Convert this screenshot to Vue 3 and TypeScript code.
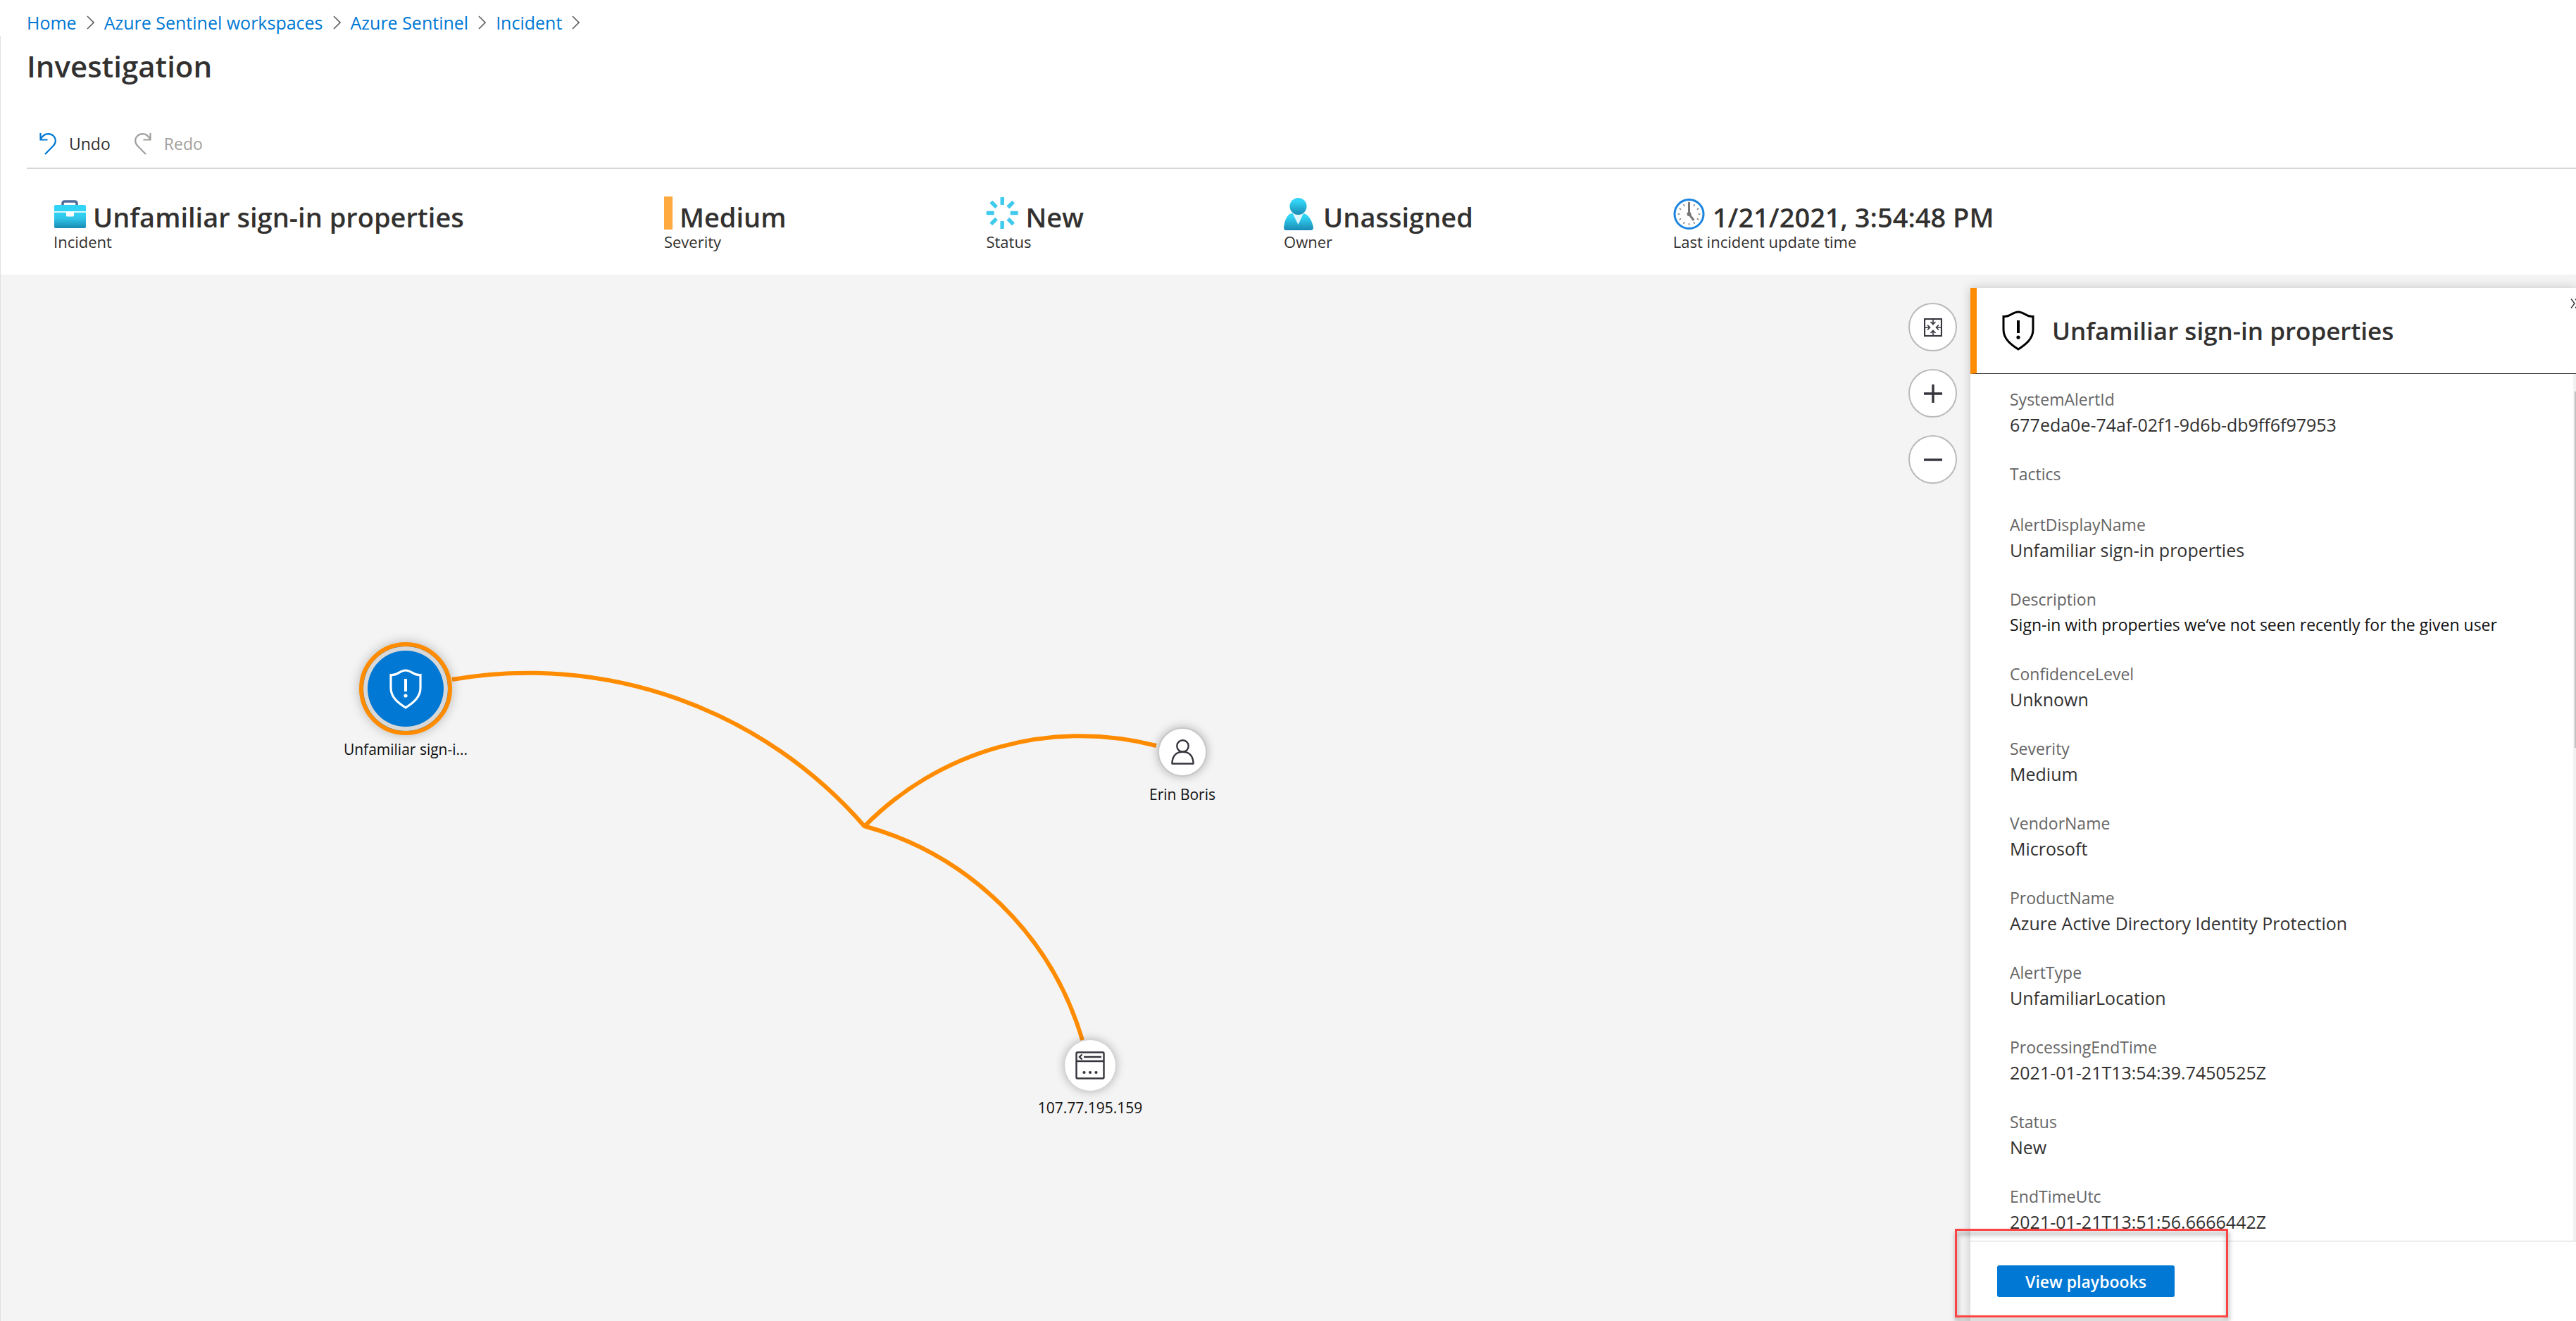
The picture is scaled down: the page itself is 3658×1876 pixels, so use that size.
<script setup lang="ts">
interface Property {
  name: string
  value?: string
}

interface GraphNode {
  id: string
  kind: 'alert' | 'account' | 'ip'
  label: string
  x: number
  y: number
}

const crumbs: string[] = ['Home', 'Azure Sentinel workspaces', 'Azure Sentinel', 'Incident']

const properties: Property[] = [
  { name: 'SystemAlertId', value: '677eda0e-74af-02f1-9d6b-db9ff6f97953' },
  { name: 'Tactics' },
  { name: 'AlertDisplayName', value: 'Unfamiliar sign-in properties' },
  { name: 'Description', value: 'Sign-in with properties we‘ve not seen recently for the given user' },
  { name: 'ConfidenceLevel', value: 'Unknown' },
  { name: 'Severity', value: 'Medium' },
  { name: 'VendorName', value: 'Microsoft' },
  { name: 'ProductName', value: 'Azure Active Directory Identity Protection' },
  { name: 'AlertType', value: 'UnfamiliarLocation' },
  { name: 'ProcessingEndTime', value: '2021-01-21T13:54:39.7450525Z' },
  { name: 'Status', value: 'New' },
  { name: 'EndTimeUtc', value: '2021-01-21T13:51:56.6666442Z' },
]

// Node centres on the graph canvas
const nodes: GraphNode[] = [
  { id: 'alert', kind: 'alert', label: 'Unfamiliar sign-i...', x: 575, y: 588 },
  { id: 'account', kind: 'account', label: 'Erin Boris', x: 1678, y: 678 },
  { id: 'ip', kind: 'ip', label: '107.77.195.159', x: 1547, y: 1123 },
]

const edges: string[] = [
  'M641 575 A632 632 0 0 1 1227 784',
  'M1226 784 A430 430 0 0 1 1641 669',
  'M1226 783 A446 446 0 0 1 1536 1087',
]
</script>

<template>
  <div class="app">
    <nav class="crumbs" aria-label="Breadcrumb">
      <template v-for="crumb in crumbs" :key="crumb">
        <a href="#">{{ crumb }}</a>
        <svg width="11" height="20" viewBox="0 0 11 20" aria-hidden="true">
          <path d="M1 1 L10 10 L1 19" fill="none" stroke="#605e5c" stroke-width="1.6" />
        </svg>
      </template>
    </nav>

    <main class="blade">
      <h1>Investigation</h1>

      <div class="toolbar">
        <button type="button" class="tool">
          <svg width="24" height="31" viewBox="0 0 24 31" fill="none" stroke="#0078d4" stroke-width="2.2" aria-hidden="true">
            <path d="M1.5 0 V9.5 H11.5 M1.5 9.5 C4 4 8 1.2 12.5 1.2 C18.5 1.2 22.8 5.5 22.8 11 C22.8 14 21.8 16 19.5 18.3 L8 30" />
          </svg>
          Undo
        </button>
        <button type="button" class="tool" disabled>
          <svg width="24" height="31" viewBox="0 0 24 31" fill="none" stroke="#a19f9d" stroke-width="2.2" aria-hidden="true">
            <path d="M22.5 0 V9.5 H12.5 M22.5 9.5 C20 4 16 1.2 11.5 1.2 C5.5 1.2 1.2 5.5 1.2 11 C1.2 14 2.2 16 4.5 18.3 L16 30" />
          </svg>
          Redo
        </button>
      </div>

      <section class="summary" aria-label="Incident summary">
        <div class="fact">
          <div class="fact-main">
            <svg width="46" height="47" viewBox="0 0 46 47" aria-hidden="true">
              <defs>
                <linearGradient id="case" x1="0" y1="0" x2="0" y2="1">
                  <stop offset="0" stop-color="#32d4f5" />
                  <stop offset="0.4" stop-color="#2fc4e8" />
                  <stop offset="1" stop-color="#198ab3" />
                </linearGradient>
              </defs>
              <path d="M13 13 V10 Q13 7 16 7 H30 Q33 7 33 10 V13" fill="none" stroke="#4f6b99" stroke-width="3.5" />
              <path d="M1 14 Q1 12 3 12 H44 Q46 12 46 14 V21.5 H1 Z" fill="#32d4f5" />
              <path d="M1 22.5 H46 V43 Q46 45 44 45 H3 Q1 45 1 43 Z" fill="url(#case)" />
              <path d="M1 21.2 H46 V22.5 H29 V27 Q29 28.5 27.5 28.5 H19.5 Q18 28.5 18 27 V22.5 H1 Z" fill="#fff" />
            </svg>
            <strong>Unfamiliar sign-in properties</strong>
          </div>
          <span>Incident</span>
        </div>

        <div class="fact">
          <div class="fact-main">
            <i class="severity-bar"></i>
            <strong>Medium</strong>
          </div>
          <span>Severity</span>
        </div>

        <div class="fact">
          <div class="fact-main">
            <svg width="46" height="47" viewBox="0 0 46 47" aria-hidden="true">
              <rect
                v-for="n in 8"
                :key="n"
                x="20.5"
                y="1"
                width="5.5"
                height="11"
                rx="1"
                fill="#40caec"
                :transform="`rotate(${n * 45} 23.2 23.5)`"
              />
            </svg>
            <strong>New</strong>
          </div>
          <span>Status</span>
        </div>

        <div class="fact">
          <div class="fact-main">
            <svg width="46" height="48" viewBox="0 0 46 48" aria-hidden="true">
              <defs>
                <linearGradient id="person" x1="0" y1="0" x2="0" y2="1">
                  <stop offset="0.2" stop-color="#32d4f5" />
                  <stop offset="1" stop-color="#198ab3" />
                </linearGradient>
              </defs>
              <path d="M0 44 C1 34 5 25 11 24 H28 C35 25 40 34 42 44 Q42 48 38 48 H3 Q0 48 0 44 Z" fill="url(#person)" />
              <path d="M12.5 24 L20.5 40 L28 24 Z" fill="#dff6fc" />
              <circle cx="20.5" cy="14" r="12" fill="url(#person)" />
            </svg>
            <strong>Unassigned</strong>
          </div>
          <span>Owner</span>
        </div>

        <div class="fact">
          <div class="fact-main">
            <svg width="46" height="48" viewBox="0 0 46 48" aria-hidden="true">
              <circle cx="22.5" cy="25" r="20.5" fill="#fff" stroke="#1b84df" stroke-width="3" />
              <g stroke="#8a8a8a" stroke-width="1.6">
                <line
                  v-for="n in 11"
                  :key="n"
                  x1="22.5"
                  y1="9"
                  x2="22.5"
                  y2="12"
                  :transform="`rotate(${n * 30} 22.5 25)`"
                />
              </g>
              <path d="M22.5 9 V25 L28.5 33" fill="none" stroke="#767676" stroke-width="3" stroke-linecap="round" />
              <circle cx="22.5" cy="25" r="3" fill="#767676" />
            </svg>
            <strong>1/21/2021, 3:54:48 PM</strong>
          </div>
          <span>Last incident update time</span>
        </div>
      </section>

      <div class="workspace">
        <section class="canvas" aria-label="Investigation graph">
          <svg class="edges" aria-hidden="true">
            <path v-for="edge in edges" :key="edge" :d="edge" />
          </svg>

          <div
            v-for="node in nodes"
            :key="node.id"
            class="node"
            :class="node.kind"
            :style="{ left: node.x + 'px', top: node.y + 'px' }"
          >
            <div class="disc">
              <svg v-if="node.kind === 'alert'" width="46" height="57" viewBox="0 0 46 57" fill="none" stroke="#fff" aria-hidden="true">
                <path d="M2 8.5 C12 9.5 14 2 23 2 S34 9.5 44 8.5 V27 C44 40 34 48 23 55 C12 48 2 40 2 27 Z" stroke-width="3.2" />
                <path d="M23 14 V32" stroke-width="4" />
                <circle cx="23" cy="38" r="2.6" fill="#fff" stroke="none" />
              </svg>
              <svg v-else-if="node.kind === 'account'" width="33" height="36" viewBox="0 0 33 36" fill="none" stroke="#37343d" stroke-width="2.4" aria-hidden="true">
                <circle cx="16.5" cy="9.5" r="8.2" />
                <path d="M1.5 34.5 V32 C2.5 23 8 17.7 16.5 17.7 S30.5 23 31.5 32 V34.5 Z" stroke-linejoin="round" />
              </svg>
              <svg v-else width="42" height="40" viewBox="0 0 42 40" fill="none" stroke="#37343d" stroke-width="2.4" aria-hidden="true">
                <rect x="1.5" y="1.5" width="39" height="37" rx="1.5" />
                <path d="M1.5 14 H40.5 M12 8 H37" />
                <path d="M9.5 4.5 L6 8 L9.5 11.5" />
                <g fill="#37343d" stroke="none">
                  <circle cx="12.5" cy="30" r="2.1" />
                  <circle cx="21" cy="30" r="2.1" />
                  <circle cx="29.5" cy="30" r="2.1" />
                </g>
              </svg>
            </div>
            <div class="node-label">{{ node.label }}</div>
          </div>

          <div class="zoom">
            <button type="button" aria-label="Fit to screen">
              <svg width="26" height="26" viewBox="0 0 26 26" fill="none" stroke="#37343d" stroke-width="1.6" aria-hidden="true">
                <rect x="1" y="1" width="24" height="24" stroke-width="2.2" />
                <path d="M13 2 V8 M9.5 5 L13 8.5 L16.5 5" />
                <path d="M13 24 V18 M9.5 21 L13 17.5 L16.5 21" />
                <path d="M2 13 H8 M5 9.5 L8.5 13 L5 16.5" />
                <path d="M24 13 H18 M21 9.5 L17.5 13 L21 16.5" />
              </svg>
            </button>
            <button type="button" aria-label="Zoom in">
              <svg width="26" height="26" viewBox="0 0 26 26" stroke="#37343d" stroke-width="3.4" aria-hidden="true">
                <path d="M0 13 H26 M13 0 V26" />
              </svg>
            </button>
            <button type="button" aria-label="Zoom out">
              <svg width="26" height="26" viewBox="0 0 26 26" stroke="#37343d" stroke-width="3.4" aria-hidden="true">
                <path d="M0 13 H26" />
              </svg>
            </button>
          </div>
        </section>

        <aside class="panel">
          <header class="panel-head">
            <svg width="46" height="57" viewBox="0 0 46 57" fill="none" stroke="#000" aria-hidden="true">
              <path d="M2 8.5 C12 9.5 14 2 23 2 S34 9.5 44 8.5 V27 C44 40 34 48 23 55 C12 48 2 40 2 27 Z" stroke-width="3" />
              <path d="M23 14 V32" stroke-width="4" />
              <circle cx="23" cy="38" r="2.6" fill="#000" stroke="none" />
            </svg>
            <h2>Unfamiliar sign-in properties</h2>
            <button type="button" class="collapse" aria-label="Collapse panel">
              <svg width="14" height="14" viewBox="0 0 14 14" fill="none" stroke="#323130" stroke-width="1.4" aria-hidden="true">
                <path d="M1 0.5 L6 7 L1 13.5 M7 0.5 L12 7 L7 13.5" />
              </svg>
            </button>
          </header>

          <div class="panel-body">
            <dl>
              <div v-for="prop in properties" :key="prop.name" class="prop">
                <dt>{{ prop.name }}</dt>
                <dd v-if="prop.value" :class="{ prose: prop.name === 'Description' }">{{ prop.value }}</dd>
              </div>
            </dl>
            <div class="track"><div class="thumb"></div></div>
          </div>

          <footer class="panel-foot">
            <button type="button" class="primary">View playbooks</button>
            <div class="callout"></div>
          </footer>
        </aside>
      </div>
    </main>
  </div>
</template>

<style>
body {
  margin: 0;
  background: #fff;
}
</style>

<style scoped>
.app {
  display: flex;
  flex-direction: column;
  height: 100vh;
  overflow: hidden;
  background: #fff;
  color: #323130;
  font-family: "Open Sans", "Noto Sans", sans-serif;
  font-size: 25px;
}

button {
  font-family: inherit;
  padding: 0;
  cursor: pointer;
}

svg {
  display: block;
  flex: none;
}

.crumbs {
  display: flex;
  align-items: center;
  gap: 14px;
  padding: 15px 38px 2px;
  line-height: 34px;
}

.crumbs a {
  color: #0078d4;
  text-decoration: none;
}

.blade {
  display: flex;
  flex-direction: column;
  flex: 1;
  min-height: 0;
  border-left: 1px solid #e0e0e0;
}

h1 {
  margin: 13px 0 0 37px;
  font-size: 42px;
  font-weight: 600;
  line-height: 60px;
}

.toolbar {
  display: flex;
  align-items: center;
  gap: 34px;
  height: 68px;
  margin: 46px 0 0 37px;
  padding-left: 18px;
  border-bottom: 2px solid #d6d6d6;
}

.tool {
  display: flex;
  align-items: center;
  gap: 18px;
  border: 0;
  background: none;
  color: #323130;
  font-size: 23px;
  line-height: 34px;
}

.tool:disabled {
  color: #a19f9d;
}

.summary {
  display: flex;
  gap: 284px;
  height: 111px;
  padding: 39px 0 0 75px;
  white-space: nowrap;
}

.fact-main {
  display: flex;
  align-items: flex-start;
  gap: 10px;
  height: 50px;
}

.fact-main strong {
  font-size: 38px;
  font-weight: 600;
  line-height: 58px;
}

.fact span {
  display: block;
  font-size: 22px;
  line-height: 28px;
}

.severity-bar {
  width: 12px;
  height: 47px;
  background: #ffa941;
}

.workspace {
  display: flex;
  flex: 1;
  min-height: 0;
  background: #f4f4f4;
}

.canvas {
  position: relative;
  flex: 1;
  min-width: 0;
}

.edges {
  position: absolute;
  inset: 0;
  width: 100%;
  height: 100%;
}

.edges path {
  fill: none;
  stroke: #ff8c00;
  stroke-width: 6;
}

.node {
  position: absolute;
  width: 0;
  height: 0;
}

.disc {
  position: absolute;
  display: flex;
  align-items: center;
  justify-content: center;
  box-sizing: border-box;
  width: 70px;
  height: 70px;
  border: 2px solid #c8c8c8;
  border-radius: 50%;
  background: #fff;
  box-shadow: 0 0 14px rgba(0, 0, 0, 0.28);
  transform: translate(-50%, -50%);
}

.ip .disc {
  width: 74px;
  height: 74px;
  border: 1px solid #d0d0d0;
}

.alert .disc {
  width: 132px;
  height: 132px;
  border: 6px solid #ff8c00;
  background: #0078d4;
  box-shadow: inset 0 0 0 6px #d8d8d8, 0 0 16px rgba(0, 0, 0, 0.25);
}

.node-label {
  position: absolute;
  top: 44px;
  color: #111;
  font-size: 21px;
  line-height: 32px;
  white-space: nowrap;
  transform: translateX(-50%);
}

.alert .node-label {
  top: 70px;
}

.zoom {
  position: absolute;
  top: 40px;
  right: 19px;
  display: flex;
  flex-direction: column;
  gap: 25px;
}

.zoom button {
  display: flex;
  align-items: center;
  justify-content: center;
  box-sizing: border-box;
  width: 69px;
  height: 69px;
  border: 2px solid #bababa;
  border-radius: 50%;
  background: #fff;
}

.panel {
  display: flex;
  flex-direction: column;
  flex: none;
  width: 860px;
  margin-top: 19px;
  background: #fff;
  box-shadow: 0 0 14px rgba(0, 0, 0, 0.2);
}

.panel-head {
  position: relative;
  display: flex;
  align-items: center;
  gap: 25px;
  box-sizing: border-box;
  height: 122px;
  padding-left: 36px;
  border-left: 9px solid #ff8c00;
  border-bottom: 1px solid #444;
}

h2 {
  margin: 0;
  font-size: 35px;
  font-weight: 600;
  line-height: 50px;
}

.collapse {
  position: absolute;
  top: 15px;
  right: -6px;
  border: 0;
  background: none;
}

.panel-body {
  display: flex;
  flex: 1;
  min-height: 0;
  overflow: hidden;
}

dl {
  flex: 1;
  margin: 0;
  padding: 17px 0 0 56px;
}

.prop {
  padding-bottom: 34px;
}

dt {
  color: #666;
  font-size: 23px;
  line-height: 38px;
}

dd {
  margin: 0;
  line-height: 34px;
}

dd.prose {
  color: #111;
  font-size: 23px;
}

.track {
  width: 4px;
  padding-top: 25px;
  background: #f1f1f1;
}

.thumb {
  width: 2px;
  height: 506px;
  margin-left: 2px;
  background: #c1c1c1;
}

.panel-foot {
  position: relative;
  box-sizing: border-box;
  height: 114px;
  padding: 34px 0 0 38px;
  border-top: 1px solid #d2d2d2;
}

.primary {
  width: 252px;
  height: 45px;
  border: 0;
  border-radius: 3px;
  background: #0078d4;
  color: #fff;
  font-size: 23px;
  font-weight: 600;
}

.callout {
  position: absolute;
  top: -18px;
  left: -22px;
  box-sizing: border-box;
  width: 388px;
  height: 126px;
  border: 3px solid #fc4444;
  filter: drop-shadow(1px 5px 3px rgba(0, 0, 0, 0.4));
  pointer-events: none;
}
</style>
